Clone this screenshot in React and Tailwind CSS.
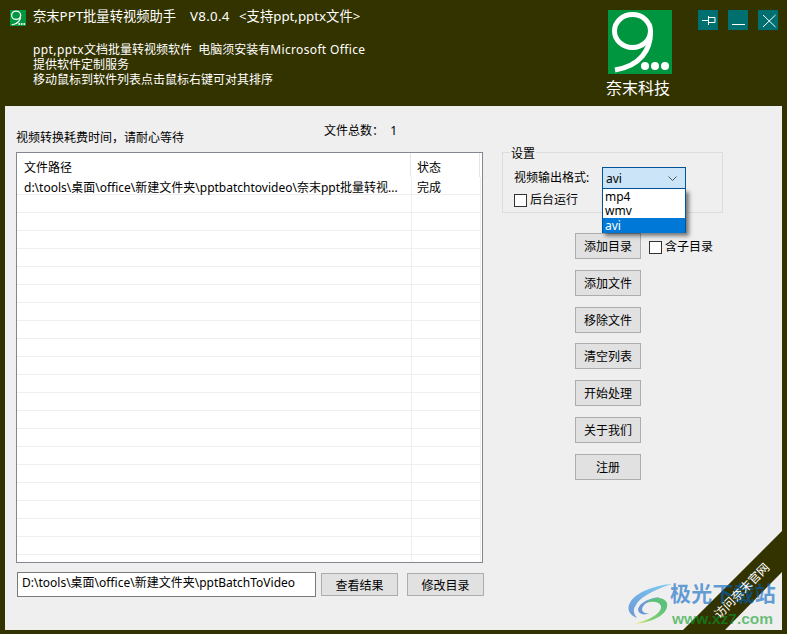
import React from 'react';

const buttons = ['添加目录', '添加文件', '移除文件', '清空列表', '开始处理', '关于我们', '注册'];
const emptyRows = Array.from({ length: 21 });

function NineLogo({ className }) {
  return (
    <svg viewBox="0 0 64 64" className={className}>
      <rect width="64" height="64" fill="#009640" />
      <ellipse cx="24.5" cy="21" rx="18" ry="16.5" fill="none" stroke="#fff" strokeWidth="5" />
      <path d="M42.5 21C43 40 32 56 7 60" fill="none" stroke="#fff" strokeWidth="5" />
      <circle cx="37" cy="56" r="4" fill="#fff" />
      <circle cx="47" cy="56" r="4" fill="#fff" />
      <circle cx="57" cy="56" r="4" fill="#fff" />
    </svg>
  );
}

function WinButton({ d }) {
  return (
    <div className="w-5 h-5 bg-[#006f6f]">
      <svg width="20" height="20" viewBox="0 0 20 20" fill="none" stroke="#fff">
        <path d={d} />
      </svg>
    </div>
  );
}

function CheckBox({ label }) {
  return (
    <div className="flex items-center gap-[3px] leading-[14px]">
      <span className="w-[13px] h-[13px] bg-white border border-[#333]" />
      <span>{label}</span>
    </div>
  );
}

function Btn({ children, className }) {
  return (
    <div className={`bg-[#e1e1e1] border border-[#adadad] flex items-center justify-center pt-[2px] text-black ${className}`}>
      {children}
    </div>
  );
}

function Row({ path, status }) {
  return (
    <div className="h-[18px] flex border-b border-[#efefef] w-[464px]">
      <div className="w-[395px] border-r border-[#efefef] pl-[7px] pt-[2px] leading-[18px] whitespace-nowrap">{path}</div>
      <div className="flex-1 border-r border-[#efefef] pl-[5px] pt-[2px] leading-[18px]">{status}</div>
    </div>
  );
}

export default function App() {
  return (
    <div className="w-[787px] h-[634px] bg-[#333300] overflow-hidden relative text-[12px] text-black font-['Noto_Sans','Noto_Sans_CJK_SC',sans-serif]">
      {/* header */}
      <div className="h-[106px] flex text-white">
        <div className="pt-[10px] pl-[10px] w-[598px]">
          <div className="flex items-center h-[16px] text-[13.3px] whitespace-nowrap">
            <NineLogo className="w-4 h-4 mr-[7px]" />
            <span className="w-[157px] -mt-[2px]">奈末PPT批量转视频助手</span>
            <span className="w-[49px] -mt-[2px] tracking-[0.3px]">V8.0.4</span>
            <span className="-mt-[2px]">&lt;支持ppt,pptx文件&gt;</span>
          </div>
          <div className="pl-[23px] mt-[16px] leading-[15px]">
            <div className="whitespace-pre">
              <span className="tracking-[0.4px]">ppt,pptx</span>文档批量转视频软件  电脑须安装有<span className="tracking-[0.35px]">Microsoft Office</span>
            </div>
            <div>提供软件定制服务</div>
            <div>移动鼠标到软件列表点击鼠标右键可对其排序</div>
          </div>
        </div>
        <div className="pt-[10px] w-[100px] pl-[10px]">
          <NineLogo className="w-16 h-16" />
          <div className="text-[16px] leading-[20px] mt-[4px] -ml-[2px] whitespace-nowrap">奈末科技</div>
        </div>
        <div className="pt-[10px] flex gap-[10px] h-[30px] box-content">
          <WinButton d="M4 10.5H10M10.5 6V15M10.5 7.5H17V12.5H10.5" />
          <WinButton d="M4 14.5H17" />
          <WinButton d="M5 5L17.5 17M17.5 5L5 17" />
        </div>
      </div>

      {/* main panel */}
      <div className="mx-[5px] h-[524px] bg-[#efefef] flex pl-[11px] relative">
        <div className="w-[468px]">
          <div className="h-[46px] relative">
            <div className="pt-[23px] leading-[18px]">视频转换耗费时间，请耐心等待</div>
            <div className="absolute left-[308px] top-[16px] leading-[18px] whitespace-pre">文件总数：  1</div>
          </div>
          <div className="w-[467px] h-[411px] bg-white border border-[#828790] overflow-hidden">
            <div className="h-[24px] flex">
              <div className="w-[394px] pl-[7px] pt-[6px] leading-[18px] border-r border-[#e5e5e5]">文件路径</div>
              <div className="w-[69px] pl-[6px] pt-[6px] leading-[18px] border-r border-[#e5e5e5]">状态</div>
            </div>
            <Row path="d:\tools\桌面\office\新建文件夹\pptbatchtovideo\奈末ppt批量转视..." status="完成" />
            {emptyRows.map((_, i) => (
              <Row key={i} />
            ))}
          </div>
          <div className="flex mt-[9px] pl-[1px] items-center">
            <div className="w-[299px] h-[25px] bg-white border border-[#7a7a7a] pl-[4px] leading-[20px] whitespace-nowrap">D:\tools\桌面\office\新建文件夹\pptBatchToVideo</div>
            <Btn className="w-[77px] h-[23px] ml-[5px]">查看结果</Btn>
            <Btn className="w-[77px] h-[23px] ml-[9px]">修改目录</Btn>
          </div>
        </div>

        <div className="ml-[18px] pt-[46px]">
          <div className="w-[221px] h-[61px] border border-[#dcdcdc] relative">
            <span className="absolute -top-[6px] left-[7px] px-[1px] bg-[#efefef] leading-[14px]">设置</span>
            <div className="flex pl-[11px] pt-[14px] items-center">
              <span className="w-[88px] leading-[22px]">视频输出格式:</span>
              <div className="w-[84px] h-[22px] bg-[#cce4f7] border border-[#005499] flex items-center justify-between pl-[3px] pr-[8px]">
                <span className="pt-px">avi</span>
                <svg width="9" height="5" viewBox="0 0 9 5" fill="none" stroke="#555"><path d="M0.5 0.5L4.5 4.5L8.5 0.5" /></svg>
              </div>
            </div>
            <div className="pl-[11px] mt-[4px]">
              <CheckBox label="后台运行" />
            </div>
            <div className="absolute left-[99px] top-[36px] w-[84px] h-[44px] bg-white border-x border-[#005499] shadow-[3px_3px_4px_rgba(0,0,0,0.5)] z-10">
              <div className="pl-[2px] h-[15px] leading-[15px]">mp4</div>
              <div className="pl-[2px] h-[14px] leading-[14px]">wmv</div>
              <div className="pl-[2px] h-[15px] leading-[15px] bg-[#0078d7] text-white">avi</div>
            </div>
          </div>
          <div className="ml-[73px] mt-[20px] flex flex-col gap-[10.83px] w-[66px]">
            {buttons.map((b) => (
              <div key={b} className="relative">
                <Btn className="h-[26px]">{b}</Btn>
                {b === '添加目录' && (
                  <div className="absolute left-[74px] top-[7px] whitespace-nowrap">
                    <CheckBox label="含子目录" />
                  </div>
                )}
              </div>
            ))}
          </div>
        </div>
      </div>

      {/* corner ribbon */}
      <div className="absolute left-0 top-0 pointer-events-none">
        <svg width="787" height="634" viewBox="0 0 787 634">
          <path d="M782 531L683 630H725L782 572Z" fill="#333300" />
        </svg>
      </div>

      {/* watermark */}
      <div className="absolute left-[628px] top-[583px] w-[150px] h-[44px]">
        <svg width="46" height="42" viewBox="0 0 46 42" className="absolute left-0 top-0">
          <defs>
            <linearGradient id="wmBlue" x1="1" y1="0" x2="0" y2="1">
              <stop offset="0" stopColor="#7fcdf0" />
              <stop offset="1" stopColor="#6c98d8" />
            </linearGradient>
            <linearGradient id="wmGreen" x1="0.7" y1="0.2" x2="0.1" y2="1">
              <stop offset="0" stopColor="#5cc27a" />
              <stop offset="0.6" stopColor="#7fd070" />
              <stop offset="1" stopColor="#e6e86a" />
            </linearGradient>
          </defs>
          <path d="M44 1C30 2 6 8 1 22C-1 28 3 33 9 35C5 30 5 26 8 22C12 14 28 6 44 1Z" fill="url(#wmBlue)" />
          <path d="M10 26C12 19 22 15 32 14C24 17 15 20 14 26C14 29 17 31 21 30C16 33 10 31 10 26Z" fill="#6c98d8" />
          <path d="M18 20C24 14 36 13 39 20C41 30 28 39 6 41C22 37 34 30 33 23C31 18 24 18 18 20Z" fill="url(#wmGreen)" />
        </svg>
        <div className="absolute left-[42px] top-[-3px] text-[21px] leading-[26px] font-bold text-[#0062c3]/60 whitespace-nowrap tracking-[0.2px]">极光下载站</div>
        <div className="absolute left-[44px] top-[26px] text-[15.5px] leading-[20px] font-bold text-[#079d28]/60 whitespace-nowrap font-['Liberation_Sans',sans-serif]">www.xz7.com</div>
      </div>
      <div className="absolute left-[702px] top-[583px] w-[80px] text-center text-white text-[12px] leading-[16px] -rotate-45 whitespace-nowrap">访问奈末官网</div>
    </div>
  );
}
